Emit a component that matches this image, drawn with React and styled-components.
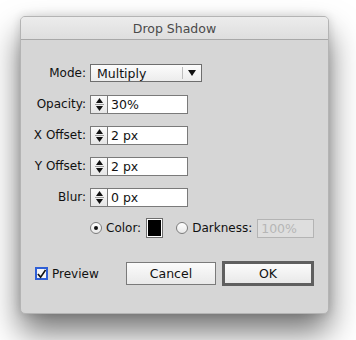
import React from 'react';
import styled, { createGlobalStyle } from 'styled-components';

const GlobalStyle = createGlobalStyle`
  html, body {
    margin: 0;
    padding: 0;
    background: #ffffff;
  }
  body {
    font-family: "DejaVu Sans", "Liberation Sans", sans-serif;
    font-size: 12px;
    color: #111;
  }
`;

const Page = styled.div`
  width: 356px;
  height: 340px;
  padding: 16px 0 0 20px;
  box-sizing: border-box;
  overflow: hidden;
`;

const Dialog = styled.div`
  width: 309px;
  height: 298px;
  box-sizing: border-box;
  background: #d6d6d6;
  border: 1px solid #b4b4b4;
  border-radius: 5px;
  box-shadow: 0 18px 32px rgba(0, 0, 0, 0.55), 0 0 10px rgba(0, 0, 0, 0.14);
  display: flex;
  flex-direction: column;
  overflow: hidden;
`;

const TitleBar = styled.div`
  height: 21px;
  flex-shrink: 0;
  display: flex;
  align-items: center;
  justify-content: center;
  background: linear-gradient(#ececec, #dedede);
  border-bottom: 1px solid #a8a8a8;
  color: #4a4a4a;
  font-size: 12.5px;
  padding-top: 1px;
`;

const Body = styled.div`
  display: flex;
  flex-direction: column;
  padding: 23px 0 0 0;
`;

const Form = styled.div`
  display: flex;
  flex-direction: column;
  gap: 11px;
`;

const Row = styled.div`
  display: flex;
  align-items: center;
  height: 20px;
`;

const Label = styled.div`
  width: 65px;
  text-align: right;
  padding-right: 4px;
  flex-shrink: 0;
`;

const Select = styled.div`
  width: 112px;
  height: 18px;
  box-sizing: border-box;
  border: 1px solid #6e6e6e;
  background: linear-gradient(#fcfcfc, #ececec);
  display: flex;
  align-items: center;
  padding-left: 6px;
`;

const SelectText = styled.span`
  flex: 1;
  font-size: 12.5px;
`;

const SelectArrow = styled.span`
  width: 18px;
  height: 12px;
  border-left: 1px solid #bdbdbd;
  display: flex;
  align-items: center;
  justify-content: center;
`;

const Stepper = styled.div`
  width: 17px;
  height: 19px;
  box-sizing: border-box;
  border: 1px solid #7a7a7a;
  border-right: none;
  background: linear-gradient(#fafafa, #e6e6e6);
  display: flex;
  flex-direction: column;
  align-items: center;
  justify-content: center;
  gap: 1px;
`;

const StepLine = styled.div`
  width: 9px;
  height: 1px;
  background: #9a9a9a;
`;

const Field = styled.div`
  width: ${({ width }) => width || 81}px;
  height: 19px;
  box-sizing: border-box;
  border: 1px solid ${({ disabled }) => (disabled ? '#b4b4b4' : '#7a7a7a')};
  background: ${({ disabled }) => (disabled ? '#dedede' : '#ffffff')};
  color: ${({ disabled }) => (disabled ? '#b6b6b6' : '#111')};
  display: flex;
  align-items: center;
  padding-left: 3px;
  font-size: 12.5px;
`;

const OptionRow = styled.div`
  display: flex;
  align-items: center;
  height: 20px;
  padding-left: 69px;
`;

const Radio = styled.span`
  width: 12px;
  height: 12px;
  box-sizing: border-box;
  border: 1px solid #7d7d7d;
  border-radius: 50%;
  background: linear-gradient(#ffffff, #e8e8e8);
  display: flex;
  align-items: center;
  justify-content: center;
  margin-right: 4px;
  &::after {
    content: '';
    width: 4px;
    height: 4px;
    border-radius: 50%;
    background: ${({ checked }) => (checked ? '#111' : 'transparent')};
  }
`;

const OptionLabel = styled.span`
  margin-right: ${({ gap }) => gap}px;
`;

const Swatch = styled.div`
  width: 17px;
  height: 20px;
  box-sizing: border-box;
  border: 1px solid #6e6e6e;
  padding: 1px;
  background: #ffffff;
  margin-right: 13px;
  &::after {
    content: '';
    display: block;
    width: 100%;
    height: 100%;
    background: #000;
  }
`;

const Footer = styled.div`
  display: flex;
  align-items: center;
  padding: 23px 0 0 14px;
`;

const Check = styled.label`
  display: flex;
  align-items: center;
  gap: 4px;
  width: 91px;
`;

const CheckBox = styled.span`
  width: 13px;
  height: 13px;
  box-sizing: border-box;
  border: 2px solid #2f5fd6;
  background: #f4f4f4;
  display: flex;
  align-items: center;
  justify-content: center;
`;

const Button = styled.div`
  width: ${({ primary }) => (primary ? 92 : 90)}px;
  height: ${({ primary }) => (primary ? 25 : 23)}px;
  box-sizing: border-box;
  border: ${({ primary }) => (primary ? '3px solid #5f5f5f' : '1px solid #7a7a7a')};
  background: linear-gradient(#fbfbfb, #e9e9e9);
  display: flex;
  align-items: center;
  justify-content: center;
  font-size: 12.5px;
  margin-left: ${({ primary }) => (primary ? 6 : 0)}px;
`;

const Triangle = ({ up }) => (
  <svg width="7" height="5" viewBox="0 0 7 5">
    <path d={up ? 'M3.5 0 L7 5 L0 5 Z' : 'M0 0 L7 0 L3.5 5 Z'} fill="#111" />
  </svg>
);

const NumberInput = ({ value }) => (
  <>
    <Stepper>
      <Triangle up />
      <StepLine />
      <Triangle />
    </Stepper>
    <Field>{value}</Field>
  </>
);

const fields = [
  { label: 'Opacity:', value: '30%' },
  { label: 'X Offset:', value: '2 px' },
  { label: 'Y Offset:', value: '2 px' },
  { label: 'Blur:', value: '0 px' },
];

const App = () => {
  return (
    <Page>
      <GlobalStyle />
      <Dialog>
        <TitleBar>Drop Shadow</TitleBar>
        <Body>
          <Form>
            <Row>
              <Label>Mode:</Label>
              <Select>
                <SelectText>Multiply</SelectText>
                <SelectArrow>
                  <svg width="8" height="6" viewBox="0 0 8 6">
                    <path d="M0 0 L8 0 L4 6 Z" fill="#111" />
                  </svg>
                </SelectArrow>
              </Select>
            </Row>
            {fields.map((f) => (
              <Row key={f.label}>
                <Label>{f.label}</Label>
                <NumberInput value={f.value} />
              </Row>
            ))}
            <OptionRow>
              <Radio checked />
              <OptionLabel gap={5}>Color:</OptionLabel>
              <Swatch />
              <Radio />
              <OptionLabel gap={5}>Darkness:</OptionLabel>
              <Field width={57} disabled>100%</Field>
            </OptionRow>
          </Form>
          <Footer>
            <Check>
              <CheckBox>
                <svg width="10" height="10" viewBox="0 0 10 10">
                  <path d="M1 5 L4 8.5 L9.5 0.5" stroke="#111" strokeWidth="1.8" fill="none" />
                </svg>
              </CheckBox>
              Preview
            </Check>
            <Button>Cancel</Button>
            <Button primary>OK</Button>
          </Footer>
        </Body>
      </Dialog>
    </Page>
  );
};

export default App;
